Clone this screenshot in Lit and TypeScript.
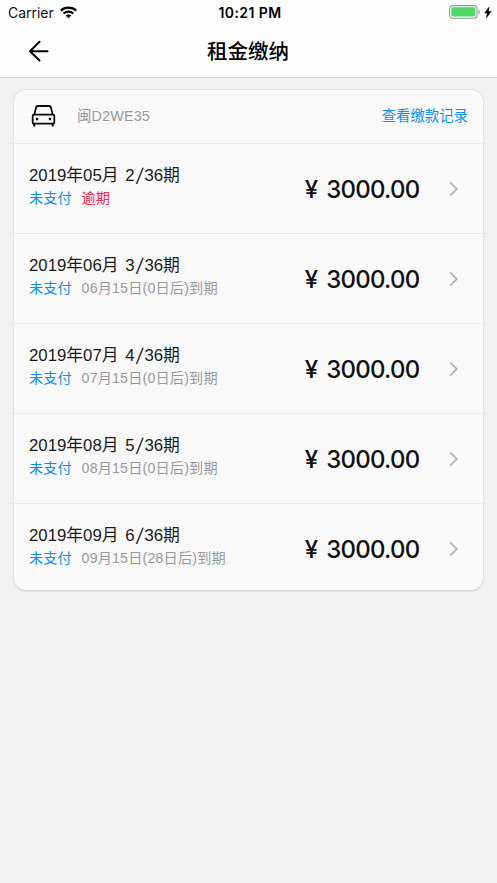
import { LitElement, html, css } from "lit";
import { customElement, property } from "lit/decorators.js";

interface Bill {
  month: string;
  term: number;
  due: string;
  overdue?: boolean;
}

const TOTAL_TERMS = 36;

const BILLS: Bill[] = [
  { month: "2019年05月", term: 2, due: "逾期", overdue: true },
  { month: "2019年06月", term: 3, due: "06月15日(0日后)到期" },
  { month: "2019年07月", term: 4, due: "07月15日(0日后)到期" },
  { month: "2019年08月", term: 5, due: "08月15日(0日后)到期" },
  { month: "2019年09月", term: 6, due: "09月15日(28日后)到期" },
];

@customElement("status-bar")
export class StatusBar extends LitElement {
  static styles = css`
    :host {
      display: grid;
      grid-template-columns: 1fr auto 1fr;
      align-items: center;
      height: 26px;
      padding: 0 5px 0 8px;
      font-family: Inter, "Liberation Sans", sans-serif;
      font-size: 14px;
      line-height: 26px;
      color: #111;
    }
    .left, .right { display: flex; align-items: center; }
    .left { gap: 6px; }
    .right { justify-content: flex-end; gap: 3px; height: 24px; margin-bottom: 2px; }
    .carrier { letter-spacing: -0.03px; }
    .time {
      font-weight: 600;
      font-size: 14px;
      letter-spacing: 0.4px;
      color: #000;
    }
    svg { display: block; }
    .wifi { margin-bottom: 1px; }
  `;
  render() {
    return html`
      <div class="left">
        <span class="carrier">Carrier</span>
        <svg class="wifi" width="17" height="13" viewBox="0 0 17 13" fill="none" stroke="#000">
          <path d="M.8 4.6C5 .6 12 .6 16.2 4.6" stroke-width="2.4" />
          <path d="M3.6 7.5C6.4 5 10.6 5 13.4 7.5" stroke-width="2.1" />
          <path d="M5.7 9.6C7.3 8.2 9.7 8.2 11.3 9.6L8.5 12.5Z" fill="#000" stroke="none" />
        </svg>
      </div>
      <span class="time">10:21 PM</span>
      <div class="right">
        <svg width="32" height="14" viewBox="0 0 32 14">
          <rect x=".6" y=".6" width="27.4" height="12.6" rx="3.2" fill="#fff" stroke="#96969a" stroke-width="1.1" />
          <rect x="2.3" y="2.3" width="24" height="9.2" rx="1.6" fill="#4cd964" />
          <path d="M29.4 4.6c1.8.8 1.8 3.8 0 4.6z" fill="#96969a" />
        </svg>
        <svg width="8" height="13" viewBox="0 0 8 13">
          <path d="M5.4.3L.2 7.3h2.9L1.9 12.8 7.7 5.3H4.7z" fill="#000" />
        </svg>
      </div>
    `;
  }
}

@customElement("nav-bar")
export class NavBar extends LitElement {
  static styles = css`
    :host {
      display: grid;
      grid-template-columns: 60px 1fr 60px;
      align-items: center;
      box-sizing: border-box;
      height: 52px;
      border-bottom: 1px solid #d4d4d4;
      padding-bottom: 1px;
    }
    .back { margin-left: 28px; display: block; }
    .title {
      text-align: center;
      font: 500 20.5px/30px "Noto Sans CJK SC", sans-serif;
      color: #000;
      padding-bottom: 2px;
      margin-right: 1px;
    }
  `;
  render() {
    return html`
      <svg class="back" width="21" height="22" viewBox="0 0 21 22" fill="none" stroke="#000"
        stroke-width="2" stroke-linecap="round" stroke-linejoin="round">
        <path d="M11.5 1.7L2 11.2l9.5 9.3M2 11.2h17.5" />
      </svg>
      <div class="title">租金缴纳</div>
    `;
  }
}

@customElement("bill-row")
export class BillRow extends LitElement {
  @property({ attribute: false }) bill!: Bill;

  static styles = css`
    :host {
      display: flex;
      align-items: center;
      box-sizing: border-box;
      height: 90px;
      padding: 2px 24px 0 15px;
      font-family: "Liberation Sans", "Noto Sans CJK SC", sans-serif;
    }
    .info { flex: 1; padding-bottom: 4px; }
    .title { font-size: 16.8px; line-height: 23px; color: #1a1a1a; word-spacing: 2px; }
    .slash {
      display: inline-block;
      width: 9.8px;
      text-align: center;
      font-family: "Noto Sans CJK SC", sans-serif;
      line-height: 1;
      transform: scaleX(1.3);
    }
    .state { display: flex; gap: 10px; font-size: 14.2px; line-height: 23px; }
    .unpaid { color: #108ee9; }
    .due { color: #999; letter-spacing: 0.17px; }
    .overdue { color: #f5274c; }
    .amount {
      font: 500 24px/30px Inter, sans-serif;
      letter-spacing: -0.75px;
      word-spacing: 3.3px;
      color: #111;
      padding-top: 2px;
      margin-right: 29.5px;
    }
    .chevron { display: block; }
  `;
  render() {
    const { month, term, due, overdue } = this.bill;
    return html`
      <div class="info">
        <div class="title">${month} ${term}<span class="slash">/</span>${TOTAL_TERMS}期</div>
        <div class="state">
          <span class="unpaid">未支付</span>
          <span class=${overdue ? "overdue" : "due"}>${due}</span>
        </div>
      </div>
      <div class="amount">¥ 3000.00</div>
      <svg class="chevron" width="10" height="16" viewBox="0 0 10 16" fill="none" stroke="#b4b4b4" stroke-width="1.8">
        <path d="M1.2 1.3L7.8 8l-6.6 6.7" />
      </svg>
    `;
  }
}

@customElement("app-root")
export class AppRoot extends LitElement {
  static styles = css`
    :host { display: block; min-height: 883px; background: #f1f1f1; }
    .top { background: #fefefe; }
    .card {
      box-sizing: border-box;
      margin: 11px 13px 0;
      height: 502px;
      border: 1px solid #e2e2e2;
      border-bottom-color: #d6d6d6;
      border-radius: 13px;
      background: #f9f9f9;
      box-shadow: 0 1px 1px rgba(0, 0, 0, 0.06);
    }
    .head {
      display: flex;
      align-items: center;
      box-sizing: border-box;
      height: 53px;
      padding: 0 15px 2px 17px;
      font: 14.4px/20px "Liberation Sans", "Noto Sans CJK SC", sans-serif;
    }
    .car { display: block; margin-right: 21px; }
    .plate { flex: 1; color: #999; letter-spacing: 0.15px; }
    .link { color: #108ee9; }
    .rule { height: 1px; margin: 0 -4px -1px; background: #eaeaea; }
  `;
  render() {
    return html`
      <div class="top"><status-bar></status-bar><nav-bar></nav-bar></div>
      <section class="card">
        <header class="head">
          <svg class="car" width="25" height="22" viewBox="0 0 25 22" fill="none" stroke="#0a0a0a"
            stroke-width="1.8" stroke-linejoin="round">
            <path d="M3.3 9.6L5 2.6Q5.3 1 6.9 1H18.1Q19.7 1 20 2.6L21.7 9.6" />
            <rect x="1.7" y="9.7" width="21.6" height="9" rx="1.3" />
            <path d="M3.3 18.7v2.7M21.7 18.7v2.7" stroke-width="2" />
            <circle cx="6" cy="14.1" r="1.3" fill="#0a0a0a" stroke="none" />
            <circle cx="19" cy="14.1" r="1.3" fill="#0a0a0a" stroke="none" />
          </svg>
          <span class="plate">闽D2WE35</span>
          <span class="link">查看缴款记录</span>
        </header>
        ${BILLS.map((bill) => html`<div class="rule"></div><bill-row .bill=${bill}></bill-row>`)}
      </section>
    `;
  }
}
